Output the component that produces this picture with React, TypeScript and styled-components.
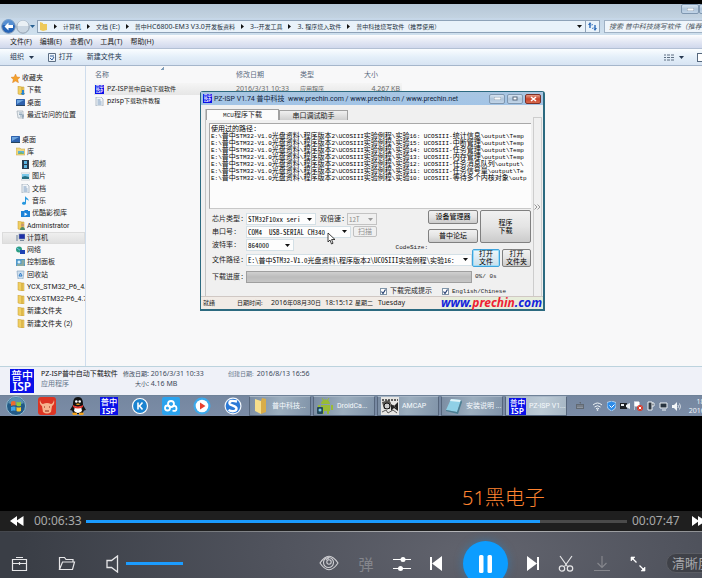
import React from "react";
import styled, { createGlobalStyle } from "styled-components";

const UI = `"Noto Sans", "Noto Sans CJK SC", sans-serif`;
const NARROW = `Roboto, "Noto Sans CJK SC", sans-serif`;
const MONO = `"Liberation Mono", "Noto Sans CJK SC", monospace`;

const Global = createGlobalStyle`
  * { box-sizing: border-box; }
  body { margin: 0; background: #000; overflow: hidden; }
  button, input, select { font: inherit; color: inherit; margin: 0; padding: 0; }
  button { cursor: pointer; }
  svg { display: block; flex: none; }
`;

/* ---------- text ---------- */

const Latin = styled.span<{ $size: number }>`
  font-size: ${(p) => p.$size}px;
`;

function Mixed({ text, latin }: { text: string; latin: number }) {
  const parts = text.split(/([\x20-\x7e]+)/).filter(Boolean);
  return (
    <>
      {parts.map((part, i) =>
        /^[\x20-\x7e]/.test(part) ? (
          <Latin key={i} $size={latin}>{part}</Latin>
        ) : (
          <React.Fragment key={i}>{part}</React.Fragment>
        ),
      )}
    </>
  );
}

/* ---------- page ---------- */

const Page = styled.div`
  display: flex;
  flex-direction: column;
  height: 100vh;
  padding-top: 4px;
  overflow: hidden;
  background: #000;
  font-family: ${UI};
`;

const Desktop = styled.main`
  position: relative;
  flex: 1;
  min-height: 0;
  display: flex;
  flex-direction: column;
  background: #f8f8f9;
  color: #1c1c1c;
  font-size: 7px;
  line-height: 10px;
  white-space: nowrap;
`;

const TitleStrip = styled.div`
  display: flex;
  justify-content: flex-end;
  height: 14px;
  background: linear-gradient(#b5c6d6, #c3d3e1);
`;

const CaptionButton = styled.button<{ $close?: boolean; $w: number }>`
  display: grid;
  place-items: center;
  width: ${(p) => p.$w}px;
  height: 10px;
  border: 1px solid ${(p) => (p.$close ? "#7c3028" : "#7f97b0")};
  border-radius: 2px;
  background: ${(p) =>
    p.$close ? "linear-gradient(#e39a85, #c8432b 50%, #d8694c)" : "linear-gradient(#d4e2f0, #afc5da 50%, #c2d5e8)"};
`;

const WindowButtons = styled.div`
  display: flex;
  margin-right: -14px;
`;

const AddressRow = styled.div`
  display: flex;
  align-items: center;
  height: 17px;
  padding-left: 1px;
  background: linear-gradient(#c5d6e7, #cfe0ee);
`;

const NavButton = styled.button`
  display: grid;
  place-items: center;
  border: 0;
  background: none;
`;

const AddressBox = styled.nav`
  display: flex;
  align-items: center;
  flex: 1;
  min-width: 0;
  height: 13px;
  margin-left: 2px;
  padding-left: 1px;
  border: 1px solid #8ea2b8;
  background: #e9f2fa;
  font-size: 6px;
`;

const Crumb = styled.a`
  display: flex;
  align-items: center;
  color: #26323f;
  text-decoration: none;
  white-space: pre;
`;

const CrumbArrow = styled.span`
  display: grid;
  place-items: center;
  width: 15px;
`;

const Push = styled.span`
  flex: 1;
`;

const Refresh = styled.button`
  display: grid;
  place-items: center;
  align-self: stretch;
  width: 14px;
  margin-left: 3px;
  border: 0;
  border-left: 1px solid #8ea2b8;
  background: none;
`;

const Search = styled.input`
  width: 112px;
  height: 13px;
  margin: 0 -14px 0 4px;
  padding: 0 4px;
  border: 1px solid #9fb1c4;
  background: #eff5fb;
  font-size: 7px;
  font-style: italic;
  &::placeholder { color: #4c5560; opacity: 1; }
`;

const MenuBar = styled.div`
  display: flex;
  align-items: center;
  gap: 8px;
  height: 14px;
  padding-left: 10px;
  border-bottom: 1px solid #b3c0d4;
  background: linear-gradient(#fdfdfe, #e6eaf5 45%, #d0d8ec);
`;

const Plain = styled.button`
  display: flex;
  align-items: center;
  gap: 3px;
  border: 0;
  background: none;
  white-space: pre;
`;

const ToolBar = styled.div`
  display: flex;
  align-items: center;
  gap: 14px;
  height: 17px;
  padding-left: 10px;
  border-bottom: 1px solid #a5b6cb;
  background: linear-gradient(#fafdff, #e4eff9 50%, #d8e4f3);
  color: #26374f;
`;

const ToolRight = styled.div`
  display: flex;
  align-items: center;
  gap: 5px;
  margin: 0 -1px 0 auto;
`;

const Body = styled.div`
  flex: 1;
  min-height: 0;
  display: flex;
`;

const Side = styled.ul`
  display: flex;
  flex-direction: column;
  width: 86px;
  margin: 0;
  padding: 6px 0 36px 2px;
  overflow: hidden;
  border-right: 1px solid #cfdded;
  font-family: ${NARROW};
  list-style: none;
`;

const SideItem = styled.li<{ $depth: number; $on?: boolean }>`
  flex: 1;
  display: flex;
  align-items: center;
  gap: 2px;
  padding-left: ${(p) => 9 + p.$depth * 5}px;
  background: ${(p) => (p.$on ? "linear-gradient(#f0f0f0, #dedede)" : "none")};
  box-shadow: ${(p) => (p.$on ? "inset 0 0 0 1px #dcdcdc" : "none")};
`;

const Files = styled.table`
  align-self: flex-start;
  width: 308px;
  margin-left: 8px;
  border-collapse: collapse;
  table-layout: fixed;
  font-size: 6px;
  text-align: left;
  th { height: 17px; padding: 0 0 0 1px; font-weight: 400; font-size: 7px; color: #5a6b80; vertical-align: middle; }
  td { height: 12px; padding: 0 0 0 1px; color: #6b6b6b; }
  td:last-child { text-align: right; padding-right: 2px; }
`;

const Col = styled.col<{ $w?: number }>`
  width: ${(p) => (p.$w ? p.$w + "px" : "auto")};
`;

const FirstHead = styled.th`
  background: linear-gradient(135deg, transparent 50%, #7f9db9 50%) 67px 1px / 3px 3px no-repeat;
`;

const FileRow = styled.tr<{ $on?: boolean }>`
  background: ${(p) => (p.$on ? "linear-gradient(#f5f5f5, #e6e6e6)" : "none")};
`;

const FileName = styled.a`
  display: flex;
  align-items: center;
  gap: 3px;
  color: #1c1c1c;
  text-decoration: none;
`;

const Details = styled.footer`
  display: flex;
  align-items: flex-start;
  gap: 7px;
  height: 29px;
  padding: 2px 10px;
  border-top: 1px solid #bcd3de;
  background: #eff1f8;
`;

const DetailGrid = styled.dl`
  display: grid;
  grid-template-columns: 79px auto 47px auto;
  column-gap: 3px;
  margin: 0;
  font-size: 6px;
  line-height: 10px;
  color: #3c4a5a;
  dt, dd { margin: 0; }
  dt { text-align: right; color: #66768a; }
`;

const DetailName = styled.dd<{ $muted?: boolean }>`
  color: ${(p) => (p.$muted ? "#66768a" : "#101010")};
  font-size: 7px;
`;

/* ---------- taskbar ---------- */

const TaskBar = styled.div`
  display: flex;
  align-items: center;
  height: 21px;
  border-top: 1px solid #6f8298;
  background: linear-gradient(#7587a0, #7b8ca6);
`;

const Pinned = styled.div`
  display: flex;
  align-items: center;
  flex: none;
  margin-right: 1px;
`;

const PinButton = styled.button`
  display: grid;
  place-items: center;
  width: 31px;
  height: 20px;
  border: 0;
  background: none;
`;

const Task = styled.button<{ $on?: boolean }>`
  display: flex;
  align-items: center;
  gap: 3px;
  flex: none;
  width: 62px;
  height: 20px;
  margin-right: 2px;
  padding-left: 3px;
  overflow: hidden;
  border: 1px solid #56667c;
  border-top-color: #a9b7c7;
  background: ${(p) =>
    p.$on ? "linear-gradient(100deg, #a3b4c4, #bccad5 60%, #a6b6c4)" : "linear-gradient(100deg, #7b8da3, #9caebe 50%, #8194a9)"};
  color: #f6fafd;
  font-family: ${NARROW};
`;

const Tray = styled.div`
  display: flex;
  align-items: center;
  gap: 4px;
  margin-left: 3px;
`;

const Clock = styled.div`
  margin: 0 -20px 0 auto;
  color: #eef3f8;
  line-height: 9px;
  text-align: center;
`;

/* ---------- programmer dialog ---------- */

const Dialog = styled.section`
  position: absolute;
  left: 200px;
  top: 87px;
  width: 345px;
  display: flex;
  flex-direction: column;
  border: 1px solid #2c6a80;
  border-width: 1px 2px 2px 1px;
  border-radius: 3px 3px 0 0;
  background: #f0f0f0;
  font-family: ${MONO};
  line-height: 8px;
`;

const DialogTitle = styled.header`
  display: flex;
  align-items: center;
  gap: 2px;
  height: 13px;
  padding: 0 2px;
  background: linear-gradient(#a9c6e2, #a2c4e6);
  color: #10233a;
  font-family: ${NARROW};
  h1 { flex: 1; margin: 0; font-size: 7px; font-weight: 400; white-space: pre; }
`;

const DialogBody = styled.div`
  display: flex;
  gap: 2px;
  margin: 0 1px 0 4px;
  padding-top: 4px;
`;

const DialogMain = styled.div`
  flex: 1;
  min-width: 0;
  border-left: 1px solid #c4c4c4;
`;

const Tabs = styled.div`
  display: flex;
  align-items: flex-end;
  height: 11px;
`;

const Tab = styled.button<{ $on?: boolean }>`
  width: ${(p) => (p.$on ? 73 : 69)}px;
  height: ${(p) => (p.$on ? 11 : 10)}px;
  border: 1px solid #a0a0a0;
  border-bottom: 0;
  background: ${(p) => (p.$on ? "#fbfbfb" : "linear-gradient(#f0f0f0, #cfcfcf)")};
  line-height: 8px;
`;

const History = styled.pre`
  height: 86px;
  margin: 3px 0 0 3px;
  padding: 2px 0 0 1px;
  overflow: hidden;
  border: 1px solid #a8a8a8;
  border-right: 0;
  border-bottom-color: #c8c8c8;
  background: #fcfcfc;
  color: #000;
  font-family: ${MONO};
  font-size: 7px;
  line-height: 7px;
`;

const HistoryLine = styled.div`
  height: 7px;
`;

const Rail = styled.div`
  display: flex;
  flex-direction: column;
  align-items: center;
  justify-content: center;
  width: 9px;
  margin-top: 8px;
  border: 1px solid #cdcdcd;
  border-bottom: 0;
`;

const Form = styled.form`
  display: flex;
  flex-direction: column;
  padding: 1px 0 0 6px;
`;

const FormTop = styled.div`
  display: flex;
`;

const FormLeft = styled.div`
  flex: 1;
  padding-top: 3px;
`;

const FormRight = styled.div`
  display: grid;
  grid-template-columns: 50px 51px;
  grid-template-rows: 14px 14px;
  gap: 5px 2px;
  > :last-child { grid-column: 2; grid-row: 1 / 3; }
`;

const Row = styled.div<{ $h: number }>`
  display: flex;
  align-items: center;
  height: ${(p) => p.$h}px;
`;

const Label = styled.label<{ $w: number }>`
  flex: none;
  width: ${(p) => p.$w}px;
`;

const MidLabel = styled(Label)`
  padding-left: 4px;
`;

const Indent = styled.span`
  flex: none;
  width: 168px;
`;

const Picker = styled.span<{ $w?: number; $off?: boolean }>`
  display: flex;
  align-items: center;
  flex: ${(p) => (p.$w ? "none" : "1")};
  min-width: 0;
  width: ${(p) => (p.$w ? p.$w + "px" : "auto")};
  height: 12px;
  padding-right: 3px;
  border: 1px solid ${(p) => (p.$off ? "#c3c3c3" : "#d4e0e6")};
  background: ${(p) => (p.$off ? "#f0f0f0" : "#fdfdfd")};
  color: ${(p) => (p.$off ? "#8c8c8c" : "#000")};
  select {
    flex: 1;
    min-width: 0;
    height: 10px;
    padding-left: 1px;
    appearance: none;
    border: 0;
    background: none;
    font-family: "Noto Sans CJK SC", sans-serif;
    font-feature-settings: "hwid";
    font-size: 7px;
    line-height: 10px;
    white-space: pre;
    opacity: 1;
  }
`;

const Push3D = styled.button<{ $focus?: boolean; $off?: boolean; $w?: number; $h?: number }>`
  width: ${(p) => (p.$w ? p.$w + "px" : "auto")};
  height: ${(p) => (p.$h ? p.$h + "px" : "auto")};
  border: 1px solid ${(p) => (p.$focus ? "#3fa3dc" : p.$off ? "#c0c0c0" : "#808080")};
  border-radius: 2px;
  box-shadow: ${(p) => (p.$focus ? "inset 0 0 0 1px #9bdcf8" : "none")};
  background: ${(p) => (p.$off ? "#f0f0f0" : p.$focus ? "linear-gradient(#eef6fa, #c9dfeb)" : "linear-gradient(#f1f1f1, #e4e4e4 50%, #cbcbcb)")};
  color: ${(p) => (p.$off ? "#909090" : "#000")};
  font-size: 7px;
  line-height: 8px;
`;

const ScanButton = styled(Push3D)`
  margin-left: 2px;
`;

const SmallCode = styled.output`
  align-self: flex-end;
  margin-left: auto;
  font-size: 6px;
`;

const FileButtons = styled.div`
  display: flex;
  gap: 2px;
  margin-top: -4px;
`;

const Meter = styled.div`
  flex: 1;
  height: 12px;
  border: 1px solid #9f9f9f;
  background: linear-gradient(#d0d0d0, #bcbcbc 50%, #c6c6c6);
`;

const Percent = styled.span`
  width: 59px;
  padding-left: 3px;
  font-size: 6px;
`;

const CheckLabel = styled.label<{ $w: number }>`
  display: flex;
  align-items: center;
  gap: 3px;
  width: ${(p) => p.$w}px;
  input {
    appearance: none;
    width: 7px;
    height: 7px;
    border: 1px solid #8095a8;
    background: #fff;
  }
`;

const CheckBox = styled.span`
  display: grid;
  > * { grid-area: 1 / 1; }
  svg { pointer-events: none; }
`;

const Status = styled.footer`
  display: flex;
  align-items: center;
  height: 13px;
  padding-left: 2px;
  border-top: 1px solid #d0c8c4;
  background: #f1ebe6;
  font-family: ${UI};
  font-size: 6px;
  span { white-space: pre; }
`;

const StatusCell = styled.span<{ $w: number }>`
  width: ${(p) => p.$w}px;
`;

const SiteLink = styled.a`
  margin-left: auto;
  padding-right: 1px;
  background: #e7edda;
  color: #1425dc;
  font-family: "Noto Sans", sans-serif;
  font-size: 12px;
  font-style: italic;
  font-weight: 700;
  line-height: 12px;
  text-decoration: none;
  em { color: #ee2233; }
`;

const Pointer = styled.span`
  position: absolute;
  left: 327px;
  top: 228px;
`;

/* ---------- player ---------- */

const Stage = styled.div`
  display: flex;
  align-items: flex-end;
  height: 95px;
  padding-left: 462px;
  color: #ff8330;
  font-size: 20px;
  font-weight: 300;
  line-height: 27px;
  white-space: nowrap;
  background: #000;
`;

const SeekRow = styled.div`
  display: flex;
  align-items: center;
  height: 20px;
  padding-left: 10px;
  background: #1f1f1f;
  color: #a9a9a9;
  font-size: 12px;
  line-height: 16px;
`;

const IconButton = styled.button<{ $w: number; $before?: number; $dim?: boolean }>`
  display: grid;
  place-items: center;
  flex: none;
  width: ${(p) => p.$w}px;
  height: 45px;
  margin-left: ${(p) => p.$before ?? 0}px;
  border: 0;
  background: none;
  color: ${(p) => (p.$dim ? "#85868c" : "#fff")};
  font-size: 15px;
  line-height: 20px;
`;

const SeekButton = styled(IconButton)`
  height: 20px;
`;

const ForwardButton = styled(SeekButton)`
  margin-right: -4px;
`;

const Time = styled.time<{ $before: number }>`
  width: 48px;
  margin-left: ${(p) => p.$before}px;
`;

const Range = styled.input<{ $value: number; $before: number; $w?: number }>`
  appearance: none;
  flex: ${(p) => (p.$w ? "none" : "1")};
  width: ${(p) => (p.$w ? p.$w + "px" : "auto")};
  min-width: 0;
  height: 3px;
  margin-left: ${(p) => p.$before}px;
  outline: 0;
  background: linear-gradient(to right, #1b9cff ${(p) => p.$value}%, #4a4a4a ${(p) => p.$value}%);
  &::-webkit-slider-thumb { appearance: none; width: 0; height: 0; }
`;

const Seek = styled(Range)`
  margin-right: 5px;
`;

const Controls = styled.div`
  display: flex;
  align-items: flex-start;
  height: 47px;
  padding: 9px 0 0 11px;
  overflow: hidden;
  border-top: 1px solid;
  border-image: linear-gradient(to right, #43464c, #777a7e 30%, #b4b5b8 65%, #8f9194) 1;
  background: radial-gradient(ellipse 460px 160px at 480px 20px, #62646e, #50535d 45%, #3a3e46);
`;

const Slot = styled.div`
  display: flex;
  align-items: center;
  height: 45px;
`;

const PauseButton = styled.button`
  display: grid;
  place-items: center;
  flex: none;
  width: 45px;
  height: 45px;
  margin-left: 20px;
  border: 0;
  border-radius: 50%;
  background: #0c9dff;
  box-shadow: 0 0 8px #1b84cf88;
`;

const Quality = styled.button`
  flex: none;
  width: 64px;
  height: 20px;
  padding-left: 5px;
  margin: 12px -28px 0 auto;
  border: 1px solid #5a5c63;
  border-radius: 10px;
  background: #3f4148;
  color: #a8a9ad;
  font-size: 13px;
  line-height: 16px;
  text-align: left;
`;

/* ---------- icons ---------- */

const Down = ({ c = "#111" }: { c?: string }) => (
  <svg width="5" height="3" viewBox="0 0 5 3"><path d="M0 0h5L2.500 3z" fill={c} /></svg>
);
const RightTip = () => (
  <svg width="3" height="5" viewBox="0 0 3 5"><path d="M0 0l3 2.500L0 5z" fill="#111" /></svg>
);

const IspLogo = ({ size }: { size: number }) => (
  <svg width={size} height={size} viewBox="0 0 24 24">
    <rect width="24" height="24" fill="#0a10e8" />
    <text x="12" y="11" fontSize="11" fontWeight="500" textAnchor="middle" fill="#fff" fontFamily="Noto Sans CJK SC, sans-serif">普中</text>
    <text x="12" y="22" fontSize="12" fontWeight="600" textAnchor="middle" fill="#fff" fontFamily="Noto Sans, sans-serif">ISP</text>
  </svg>
);

type Glyph = "star" | "down" | "desk" | "recent" | "lib" | "video" | "pic" | "doc" | "music" | "youku" | "user" | "pc" | "net" | "panel" | "bin" | "folder";

function SideIcon({ kind }: { kind: Glyph }) {
  const folder = <path d="M2 0l4 1v8l-4-1z M6 1h2v8H6z" fill="#f0cf62" stroke="#c69a35" strokeWidth=".5" />;
  const art: Record<Glyph, React.ReactNode> = {
    star: <path d="M4.500 0l1.400 3 3.100.3-2.300 2.200.8 3.300-3-1.700-3 1.700.8-3.300L0 3.300 3.100 3z" fill="#f4a12c" stroke="#d97a1c" strokeWidth=".4" />,
    down: <>{folder}<path d="M6 4v3H4.500L7 9.500 9 7H8V4z" fill="#2585d3" /></>,
    desk: <><rect y="1" width="9" height="7" rx=".5" fill="#2f62ad" /><path d="M1 2h7L1 6z" fill="#6ea6df" /><path d="M0 7h9v1H0z" fill="#26435f" /></>,
    recent: <><path d="M1 1h6v7H2z" fill="#e9eef2" stroke="#93a0aa" strokeWidth=".6" /><path d="M3 3h3M3 4.500h3M4 6h4M7 4v5" stroke="#6f8ba5" strokeWidth=".7" /></>,
    lib: <><path d="M0 1h4l1 1h4v6H0z" fill="#f0d77e" stroke="#c6a14a" strokeWidth=".5" /><path d="M2 4h6v3H2z" fill="#5fb0d8" /><path d="M2 7l3-2 3 2z" fill="#7eb55a" /></>,
    video: <><rect x="1" width="7" height="9" fill="#2a3a4c" /><path d="M3 1h3v3H3zM3 5h3v3H3z" fill="#5cb4e0" /></>,
    pic: <><rect y="1" width="9" height="7" fill="#fff" stroke="#9aa9b5" strokeWidth=".5" /><path d="M1 2h7v3H1z" fill="#7cc8ea" /><path d="M1 5l3-1 4 1v2H1z" fill="#256f83" /></>,
    doc: <><path d="M1 0h5l2 2v7H1z" fill="#f2f5f8" stroke="#8697a8" strokeWidth=".6" /><path d="M2.500 3h3M2.500 5h4M2.500 7h4" stroke="#5881ad" strokeWidth=".8" /></>,
    music: <path d="M4 0c1 2 4 2 3.500 5C7 3.500 6 3.500 5 3.500V7.500A2 1.500 0 1 1 4 6z" fill="#2798df" />,
    youku: <><path d="M0 2h3l1-1h3v1h2v6H0z" fill="#1d83d8" /><path d="M3.500 3.500l3 1.800-3 1.700z" fill="#fff" /></>,
    user: <>{folder}<circle cx="6.500" cy="4" r="1.500" fill="#c79672" /><path d="M4 9c0-4 5-4 5 0z" fill="#4f8b6a" /></>,
    pc: <><path d="M0 2h2v6H0z" fill="#aab4bf" /><rect x="3" y="1" width="6" height="5" fill="#1e2fa8" stroke="#7d8fa5" strokeWidth=".6" /><path d="M4 7h4v1H4z" fill="#78899b" /></>,
    net: <><circle cx="3" cy="3.500" r="3" fill="#2b9d83" /><path d="M1 2l4 3" stroke="#6fc4ee" /><rect x="4" y="4" width="5" height="4" fill="#1f43b4" /></>,
    panel: <><rect y="1" width="9" height="7" fill="#5199cb" /><circle cx="3" cy="4" r="1.500" fill="#d9f0fa" /><path d="M5.500 3h3M5.500 5h3M1 7h7" stroke="#e5c35d" strokeWidth=".8" /></>,
    bin: <><path d="M1 1h7L7 9H2z" fill="#cfe0ef" stroke="#7d9cba" strokeWidth=".6" /><path d="M3 6l1.500-3L6 6z" fill="none" stroke="#2f7ac7" /></>,
    folder,
  };
  return <svg width="9" height="9" viewBox="0 0 9 9">{art[kind]}</svg>;
}

const sideItems: { t: string; k?: Glyph; d: number; on?: boolean }[] = [
  { t: "收藏夹", k: "star", d: 0 },
  { t: "下载", k: "down", d: 1 },
  { t: "桌面", k: "desk", d: 1 },
  { t: "最近访问的位置", k: "recent", d: 1 },
  { t: "", d: 0 },
  { t: "桌面", k: "desk", d: 0 },
  { t: "库", k: "lib", d: 1 },
  { t: "视频", k: "video", d: 2 },
  { t: "图片", k: "pic", d: 2 },
  { t: "文档", k: "doc", d: 2 },
  { t: "音乐", k: "music", d: 2 },
  { t: "优酷影视库", k: "youku", d: 2 },
  { t: "Administrator", k: "user", d: 1 },
  { t: "计算机", k: "pc", d: 1, on: true },
  { t: "网络", k: "net", d: 1 },
  { t: "控制面板", k: "panel", d: 1 },
  { t: "回收站", k: "bin", d: 1 },
  { t: "YCX_STM32_P6_4.7", k: "folder", d: 1 },
  { t: "YCX-STM32-P6_4.7", k: "folder", d: 1 },
  { t: "新建文件夹", k: "folder", d: 1 },
  { t: "新建文件夹 (2)", k: "folder", d: 1 },
];

const crumbs = ["计算机", "文档 (E:)", "普中HC6800-EM3 V3.0开发板资料", "3--开发工具", "3. 程序烧入软件", "普中科技烧写软件（推荐使用）"];

const base = "E:\\普中STM32-V1.0光盘资料\\程序版本2\\UCOSIII实验例程\\实验";
const history = [
  "16: UCOSIII-统计信息\\output\\Temp",
  "15: UCOSIII-中断管理\\output\\Temp",
  "14: UCOSIII-任务管理\\output\\Temp",
  "13: UCOSIII-内存管理\\output\\Temp",
  "12: UCOSIII-任务消息队列\\output\\",
  "11: UCOSIII-任务信号量\\output\\Te",
  "10: UCOSIII-等待多个内核对象\\outp",
];

const pins: { name: string; art: React.ReactNode }[] = [
  { name: "开始", art: <svg width="20" height="20" viewBox="0 0 20 20"><circle cx="10" cy="10" r="9.500" fill="#235a86" stroke="#8fb9cf" /><path d="M2 7a8.500 8.500 0 0 1 16 0q-8 4-16 0z" fill="#7fb4cc" opacity=".6" /><path d="M5 6q2-1.500 4.500-.5v4Q7 9 5 10z" fill="#ee6a2d" /><path d="M10.500 5.800q2 1 4.500 0v4q-2.500 1-4.500 0z" fill="#8fc93d" /><path d="M5 11q2-1 4.500-.3v4Q7 14 5 15z" fill="#42a5e8" /><path d="M10.500 11q2 1 4.500 0v4q-2.500 1-4.500 0z" fill="#fbc82e" /></svg> },
  { name: "游戏", art: <svg width="18" height="18" viewBox="0 0 18 18"><rect width="18" height="18" rx="3" fill="#dd3423" /><path d="M2 3q1 4 3 4 4-2 8 0 2 0 3-4 1 4-2 6l-1 6q-4 3-8 0L4 9Q1 7 2 3z" fill="#f7b48e" /><path d="M6 10h1M11 10h1M7 14h4" stroke="#8a2717" /></svg> },
  { name: "QQ", art: <svg width="18" height="18" viewBox="0 0 18 18"><path d="M9 0C4 0 4 5 4 8l-3 5 2 .5L5 17h8l2-3.500 2-.5-3-5c0-3 0-8-5-8z" fill="#111" /><path d="M6 9q3 2 6 0l1 5q-4 4-8 0z" fill="#fff" /><path d="M4 8q5 3 10 0v2q-5 3-10 0z" fill="#e5322c" /><circle cx="7.300" cy="4.500" r="1.300" fill="#fff" /><circle cx="10.700" cy="4.500" r="1.300" fill="#fff" /><path d="M6.500 7q2.500-1 5 0-2.500 1.800-5 0zM3 16q2-1 5 0v2H4zM10 16q3-1 5 0l-1 2h-4z" fill="#f3a21c" /></svg> },
  { name: "PZ-ISP", art: <IspLogo size={18} /> },
  { name: "酷狗", art: <svg width="18" height="18" viewBox="0 0 18 18"><circle cx="9" cy="9" r="7.500" fill="#1c84d0" stroke="#fff" strokeWidth="1.200" /><path d="M7 5.500v7M11.500 5.500L8.500 9l3 3.500M7 9h1.500" stroke="#fff" strokeWidth="1.600" fill="none" /></svg> },
  { name: "网盘", art: <svg width="18" height="18" viewBox="0 0 18 18"><rect width="18" height="18" rx="2" fill="#2ba3ee" /><circle cx="9" cy="7" r="3" fill="none" stroke="#fff" strokeWidth="1.800" /><circle cx="5.500" cy="11" r="2.500" fill="none" stroke="#fff" strokeWidth="1.800" /><path d="M10.500 9q4-1 4 2.500t-4 2" fill="none" stroke="#fff" strokeWidth="1.800" /></svg> },
  { name: "播放器", art: <svg width="18" height="18" viewBox="0 0 18 18"><circle cx="9" cy="9" r="8.500" fill="#3ba9ec" /><circle cx="9" cy="9" r="6.300" fill="#fff" /><path d="M7 5.500l5.500 3.500L7 12.500z" fill="#e8402f" /></svg> },
  { name: "搜狗", art: <svg width="18" height="18" viewBox="0 0 18 18"><circle cx="9" cy="9" r="8.500" fill="#f4f8fc" /><circle cx="9" cy="9" r="7.300" fill="#2b79d6" /><path d="M13 4.500Q5 2.500 5.500 6.500C6 9 12.500 8.500 12.500 11.500S8 15 4.500 13" fill="none" stroke="#fff" strokeWidth="2.400" /></svg> },
];

const tasks: { t: string; on?: boolean; art: React.ReactNode }[] = [
  { t: "普中科技...", art: <svg width="16" height="18" viewBox="0 0 16 18"><path d="M2 2l6 2v13l-6-3z" fill="#f7df8b" /><path d="M8 4l1-3 4 1v13l-5 2z" fill="#d9ad49" /></svg> },
  { t: "DroidCa...", art: <svg width="17" height="18" viewBox="0 0 17 18"><path d="M4 7a4.500 4.500 0 0 1 9 0zM4 8h9v6H4zM1 8h2v5H1zM14 8h2v5h-2zM5 14h2v3H5zM10 14h2v3h-2z" fill="#99bb35" /><path d="M5 1l2 3M12 1l-2 3" stroke="#99bb35" /><rect y="10" width="6" height="7" rx="1" fill="#23485a" /><circle cx="3" cy="13" r="1.500" fill="#7fc8e8" /></svg> },
  { t: "AMCAP", art: <svg width="18" height="18" viewBox="0 0 18 18"><rect width="18" height="18" fill="#e6e6e4" /><path d="M1 5l7-2 2 3-1 6H3z" fill="#55534f" /><path d="M1 3h8M10 3h7" stroke="#333" strokeWidth="1.400" strokeDasharray="2 1" /><circle cx="6" cy="9" r="3" fill="#ccc" stroke="#111" /><path d="M10 7l3 2 4-4v9l-4-3-3 3z" fill="#222" /><path d="M1 15l4-2 2 3 5-3 4 3M12 8l3 3" stroke="#555" fill="none" /></svg> },
  { t: "安装说明 ...", art: <svg width="18" height="18" viewBox="0 0 18 18"><path d="M6 2l10 1-4 12-11-2z" fill="#8fd0e6" /><path d="M6 2l10 1-1 2-10-1z" fill="#dff3f8" /><path d="M16 3l1 2-4 12-12-3v-1l11 2z" fill="#4a7f93" /></svg> },
  { t: "PZ-ISP V1...", on: true, art: <IspLogo size={17} /> },
];

const TrayIcons = () => (
  <Tray>
    <svg width="16" height="10" viewBox="0 0 16 10"><path d="M4 3h8v5H4zM7 1h2v2" fill="#616973" /><path d="M5 5h6M5 6.500h6" stroke="#aeb6bf" strokeWidth=".6" /></svg>
    <svg width="11" height="10" viewBox="0 0 11 10" fill="none" stroke="#eef3f7"><path d="M1 4q4.500-4 9 0M2.500 6q3-2.600 6 0M4 7.800q1.500-1.200 3 0" /><circle cx="5.500" cy="9" r=".5" /></svg>
    <svg width="9" height="10" viewBox="0 0 9 10"><path d="M4.500 0L9 1.500V5q0 3-4.500 5Q0 8 0 5V1.500z" fill="#2e8ce8" stroke="#d9ebfa" strokeWidth=".7" /><path d="M2.500 4.500l2 2 3-3" stroke="#fff" fill="none" /></svg>
    <svg width="10" height="8" viewBox="0 0 10 8"><path d="M0 1h7v6H0z" fill="#1b2026" /><path d="M1 2h3v2H1zM6 3l4-2v6L6 5z" fill="#e9eef2" /></svg>
    <svg width="9" height="10" viewBox="0 0 9 10"><path d="M0 0v9M1 1h4v4H1z" fill="#fff" stroke="#fff" /><circle cx="6" cy="7" r="3" fill="#d93a2b" /><path d="M4.800 5.800l2.400 2.400m0-2.400L4.800 8.200" stroke="#fff" /></svg>
    <svg width="8" height="10" viewBox="0 0 8 10"><path d="M1 1h4v8H1zM5 2h2v3H5" fill="#303943" stroke="#eef3f7" /></svg>
    <svg width="9" height="9" viewBox="0 0 9 9"><path d="M1 1h7v5H1z" fill="#283440" stroke="#eef3f7" /><path d="M3 8h4" stroke="#eef3f7" /></svg>
    <svg width="9" height="9" viewBox="0 0 9 9"><path d="M0 3h2l3-3v9L2 6H0z" fill="#f3f6f9" /><path d="M6 3q1 1.500 0 3M7.500 1.500q2 3 0 6" stroke="#f3f6f9" fill="none" strokeWidth=".8" /></svg>
  </Tray>
);

/* ---------- pieces ---------- */

function Pick({ id, value, w, off }: { id: string; value: string; w?: number; off?: boolean }) {
  return (
    <Picker $w={w} $off={off}>
      <select id={id} disabled={off} defaultValue={value}>
        <option value={value}>{value}</option>
      </select>
      <Down c={off ? "#999" : "#111"} />
    </Picker>
  );
}

function Check({ text, w }: { text: string; w: number }) {
  return (
    <CheckLabel $w={w}>
      <CheckBox>
        <input type="checkbox" defaultChecked />
        <svg width="7" height="7" viewBox="0 0 7 7"><path d="M1.500 3.500l1.500 2 2.500-4" stroke="#233e70" strokeWidth="1.200" fill="none" /></svg>
      </CheckBox>
      <span><Mixed text={text} latin={6} /></span>
    </CheckLabel>
  );
}

function IspDialog() {
  return (
    <Dialog>
      <DialogTitle>
        <IspLogo size={9} />
        <h1>PZ-ISP V1.74 普中科技  www.prechin.com / www.prechin.cn / www.prechin.net</h1>
        <CaptionButton $w={16} aria-label="最小化"><svg width="7" height="3"><rect width="7" height="3" fill="#f7f9fb" stroke="#65788c" strokeWidth=".6" /></svg></CaptionButton>
        <CaptionButton $w={16} aria-label="最大化"><svg width="6" height="5"><rect x="1" y="1" width="4" height="3" fill="#fff" stroke="#58697c" /></svg></CaptionButton>
        <CaptionButton $w={16} $close aria-label="关闭"><svg width="7" height="6" viewBox="0 0 7 6"><path d="M1 1l5 4M6 1L1 5" stroke="#fff" strokeWidth="1.600" /></svg></CaptionButton>
      </DialogTitle>
      <DialogBody>
        <DialogMain>
          <Tabs>
            <Tab $on><Mixed text="MCU程序下载" latin={6} /></Tab>
            <Tab>串口调试助手</Tab>
          </Tabs>
          <History>
            <HistoryLine>使用过的路径:</HistoryLine>
            {history.map((h) => (
              <HistoryLine key={h}><Mixed text={base + h} latin={6} /></HistoryLine>
            ))}
          </History>
          <Form onSubmit={(e) => e.preventDefault()}>
            <FormTop>
              <FormLeft>
                <Row $h={12}>
                  <Label $w={34} htmlFor="chip">芯片类型:</Label>
                  <Pick id="chip" value="STM32F10xx seri" w={70} />
                  <MidLabel $w={31} htmlFor="speed">双倍速:</MidLabel>
                  <Pick id="speed" value="12T" w={30} off />
                </Row>
                <Row $h={13}>
                  <Label $w={34} htmlFor="port">串口号:</Label>
                  <Pick id="port" value={"COM4\u00a0 USB-SERIAL CH340"} w={105} />
                  <ScanButton $w={24} $h={11} $off type="button">扫描</ScanButton>
                </Row>
                <Row $h={14}>
                  <Label $w={34} htmlFor="baud">波特率:</Label>
                  <Pick id="baud" value="864000" w={48} />
                  <SmallCode>CodeSize:</SmallCode>
                </Row>
              </FormLeft>
              <FormRight>
                <Push3D type="button">设备管理器</Push3D>
                <Push3D type="button">普中论坛</Push3D>
                <Push3D type="button">程序<br />下载</Push3D>
              </FormRight>
            </FormTop>
            <Row $h={15}>
              <Label $w={34} htmlFor="path">文件路径:</Label>
              <Pick id="path" value={base + "16:"} />
              <FileButtons>
                <Push3D $w={28} $h={18} $focus type="button">打开<br />文件</Push3D>
                <Push3D $w={29} $h={18} type="button">打开<br />文件夹</Push3D>
              </FileButtons>
            </Row>
            <Row $h={19}>
              <Label as="span" $w={34}>下载进度:</Label>
              <Meter role="progressbar" aria-valuenow={0} />
              <Percent>0%/ 0s</Percent>
            </Row>
            <Row $h={10}>
              <Indent />
              <Check text="下载完成提示" w={62} />
              <Check text="English/Chinese" w={80} />
            </Row>
          </Form>
        </DialogMain>
        <Rail>
          <svg width="7" height="6" viewBox="0 0 7 6" fill="none" stroke="#8c8c8c" strokeWidth=".9"><path d="M.5.500L3 3 .5 5.500M3.500.500L6 3 3.500 5.500" /></svg>
        </Rail>
      </DialogBody>
      <Status>
        <StatusCell $w={34}>就绪</StatusCell>
        <StatusCell $w={34}>日期时间:</StatusCell>
        <StatusCell $w={54}><Mixed text="2016年08月30日" latin={7} /></StatusCell>
        <StatusCell $w={30}><Mixed text="18:15:12" latin={7} /></StatusCell>
        <StatusCell $w={23}>星期二</StatusCell>
        <StatusCell $w={30}><Mixed text="Tuesday" latin={7} /></StatusCell>
        <SiteLink href="#site">www.<em>prechin</em>.com</SiteLink>
      </Status>
    </Dialog>
  );
}

export default function App() {
  return (
    <Page>
      <Global />
      <Desktop>
        <TitleStrip>
          <WindowButtons>
            <CaptionButton $w={18} aria-label="最小化"><svg width="7" height="3"><rect width="7" height="3" fill="#f7f9fb" stroke="#65788c" strokeWidth=".6" /></svg></CaptionButton>
            <CaptionButton $w={17} aria-label="最大化" />
          </WindowButtons>
        </TitleStrip>
        <AddressRow>
          <NavButton aria-label="后退"><svg width="15" height="15" viewBox="0 0 15 15"><circle cx="7.500" cy="7.500" r="6.800" fill="#2464b8" stroke="#8499b4" /><path d="M1.500 6a6 6 0 0 1 12 0z" fill="#6ba0dc" opacity=".7" /><path d="M7.500 3.500l-4 4 4 4V9H12V6H7.500z" fill="#fff" /></svg></NavButton>
          <NavButton aria-label="前进"><svg width="14" height="14" viewBox="0 0 14 14"><circle cx="7" cy="7" r="6.200" fill="#cad6e2" stroke="#909eae" /><path d="M1.500 6a5.500 5.500 0 0 1 11 0z" fill="#eaf0f5" /></svg></NavButton>
          <NavButton aria-label="历史"><Down c="#286092" /></NavButton>
          <AddressBox>
            <svg width="9" height="9" viewBox="0 0 9 9"><path d="M1 0l3 1v8L1 8z M4 2h4v6L4 9z" fill="#eec95a" /></svg>
            {crumbs.map((c) => (
              <Crumb key={c} href="#folder">
                <CrumbArrow><RightTip /></CrumbArrow>
                <Mixed text={c} latin={7} />
              </Crumb>
            ))}
            <Push />
            <Down />
            <Refresh aria-label="刷新"><svg width="9" height="9" viewBox="0 0 9 9"><path d="M2 0L0 3h1.300v3h1.400V3H4zM2.700 2h2v1.200h-2zM7 9l2-3H7.700V3H6.300v3H5zM4.300 5.800h2V7h-2z" fill="#2a6ab8" /></svg></Refresh>
          </AddressBox>
          <Search aria-label="搜索" placeholder="搜索 普中科技烧写软件（推荐使用）" />
        </AddressRow>
        <MenuBar>
          {["文件(F)", "编辑(E)", "查看(V)", "工具(T)", "帮助(H)"].map((m) => <Plain key={m}>{m}</Plain>)}
        </MenuBar>
        <ToolBar>
          <Plain>组织 <Down c="#26374f" /></Plain>
          <Plain><svg width="8" height="9" viewBox="0 0 8 9"><path d="M.5.500h7v8h-7z" fill="#eef4fa" stroke="#5d6f84" /><path d="M2 3h4M2 5l2 2 2-3" stroke="#2d5c9b" fill="none" /></svg>打开</Plain>
          <Plain>新建文件夹</Plain>
          <ToolRight>
            <svg width="10" height="7" viewBox="0 0 10 7"><path d="M0 1h2M3 1h3M7 1h3M0 3.500h2M3 3.500h3M7 3.500h3M0 6h2M3 6h3M7 6h3" stroke="#5c6d80" /></svg>
            <Down c="#26374f" />
            <svg width="14" height="9" viewBox="0 0 14 9"><rect x="8.500" y=".5" width="9" height="8" fill="#fff" stroke="#54677d" /></svg>
          </ToolRight>
        </ToolBar>
        <Body>
          <Side>
            {sideItems.map((s, i) => (
              <SideItem key={i} $depth={s.d} $on={s.on}>
                {s.k && <SideIcon kind={s.k} />}
                {s.t}
              </SideItem>
            ))}
          </Side>
          <Files>
            <colgroup><Col $w={141} /><Col $w={64} /><Col $w={64} /><Col /></colgroup>
            <thead><tr><FirstHead>名称</FirstHead><th>修改日期</th><th>类型</th><th>大小</th></tr></thead>
            <tbody>
              <FileRow $on>
                <td><FileName href="#file"><IspLogo size={9} /><span><Mixed text="PZ-ISP普中自动下载软件" latin={7} /></span></FileName></td>
                <td><Mixed text="2016/3/31 10:33" latin={7} /></td>
                <td>应用程序</td>
                <td><Mixed text="4,267 KB" latin={7} /></td>
              </FileRow>
              <FileRow>
                <td><FileName href="#file"><SideIcon kind="doc" /><span><Mixed text="pzisp下载软件教程" latin={7} /></span></FileName></td>
                <td /><td /><td />
              </FileRow>
            </tbody>
          </Files>
        </Body>
        <Details>
          <IspLogo size={24} />
          <DetailGrid>
            <DetailName><Mixed text="PZ-ISP普中自动下载软件" latin={7} /></DetailName>
            <dd><Mixed text="修改日期: 2016/3/31 10:33" latin={7} /></dd>
            <dt>创建日期:</dt>
            <dd><Mixed text="2016/8/13 16:56" latin={7} /></dd>
            <DetailName $muted>应用程序</DetailName>
            <dd><Mixed text="　　大小: 4.16 MB" latin={7} /></dd>
          </DetailGrid>
        </Details>
        <TaskBar>
          <Pinned>
            {pins.map((p) => <PinButton key={p.name} aria-label={p.name}>{p.art}</PinButton>)}
          </Pinned>
          {tasks.map((t) => <Task key={t.t} $on={t.on}>{t.art}{t.t}</Task>)}
          <TrayIcons />
          <Clock>18:15<br />2016/8/30</Clock>
        </TaskBar>
        <IspDialog />
        <Pointer>
          <svg width="9" height="13" viewBox="0 0 9 13"><path d="M1 1v9l2-2 1.500 4 1.500-.7L4.600 7.500H8z" fill="#fff" stroke="#111" strokeWidth=".8" /></svg>
        </Pointer>
      </Desktop>
      <Stage>51黑电子</Stage>
      <SeekRow>
        <SeekButton $w={14} aria-label="快退"><svg width="14" height="10" viewBox="0 0 14 10"><path d="M7 0v10L0 5zM13.500 0v10L6 5z" fill="#fff" /></svg></SeekButton>
        <Time $before={10}>00:06:33</Time>
        <Seek type="range" aria-label="进度" defaultValue={84} $value={84} $before={4} />
        <Time $before={0}>00:07:47</Time>
        <ForwardButton $w={14} $before={12} aria-label="快进"><svg width="14" height="10" viewBox="0 0 14 10"><path d="M0 0v10l7-5zM6 0v10l8-5z" fill="#fff" /></svg></ForwardButton>
      </SeekRow>
      <Controls>
        <IconButton $w={17} aria-label="工具箱"><svg width="17" height="16" viewBox="0 0 17 16" fill="none" stroke="#e6e6e8"><path d="M1.500 3.500h14v11h-14zM5 1.500h7M1.500 7.500h14M8.500 6v3" strokeWidth="1.200" /></svg></IconButton>
        <IconButton $w={18} $before={30} aria-label="打开"><svg width="18" height="15" viewBox="0 0 18 15" fill="none" stroke="#e6e6e8" strokeWidth="1.200"><path d="M1.500 13.500v-12h5l1.500 2h7v2.500M1.500 13.500L4.500 6h12l-2 7.500z" /></svg></IconButton>
        <IconButton $w={14} $before={30} aria-label="音量"><svg width="14" height="18" viewBox="0 0 14 18" fill="none" stroke="#e6e6e8" strokeWidth="1.300"><path d="M1 5.500h4.500L11.500 1v16L5.500 12.500H1z" /></svg></IconButton>
        <Slot><Range type="range" aria-label="音量" defaultValue={100} $value={100} $before={6} $w={57} /></Slot>
        <IconButton $w={20} $before={136} aria-label="护眼"><svg width="20" height="18" viewBox="0 0 20 18" fill="none" stroke="#d0d0d4" strokeWidth="1.100"><path d="M1 8Q10-5.500 19 8 10 21.500 1 8z" /><circle cx="9.500" cy="7.500" r="5" /><circle cx="10" cy="7" r="2.200" /><path d="M7 5q1-2 3-1" /></svg></IconButton>
        <IconButton $w={18} $before={18} $dim aria-label="弹幕">弹</IconButton>
        <IconButton $w={20} $before={17} aria-label="设置"><svg width="20" height="16" viewBox="0 0 20 16"><path d="M1 3.500h18M1 12.500h18" stroke="#fff" /><circle cx="11" cy="3.500" r="2.500" fill="#fff" /><circle cx="8.500" cy="12.500" r="2.500" fill="#fff" /></svg></IconButton>
        <IconButton $w={14} $before={17} aria-label="上一个"><svg width="14" height="15" viewBox="0 0 14 15"><path d="M1 1h2v13H1zM13 0v15L3 7.500z" fill="#fff" /></svg></IconButton>
        <PauseButton aria-label="暂停"><svg width="13" height="18" viewBox="0 0 13 18"><rect width="4.500" height="18" rx="1.500" fill="#fff" /><rect x="8.500" width="4.500" height="18" rx="1.500" fill="#fff" /></svg></PauseButton>
        <IconButton $w={14} $before={18} aria-label="下一个"><svg width="14" height="15" viewBox="0 0 14 15"><path d="M11 1h2v13h-2zM1 0v15l10-7.500z" fill="#fff" /></svg></IconButton>
        <IconButton $w={16} $before={18} aria-label="截取"><svg width="16" height="17" viewBox="0 0 16 17" fill="none" stroke="#e6e6e8" strokeWidth="1.200"><path d="M2 1l7.500 10.500M14 1L6.500 11.500" /><circle cx="4" cy="13.500" r="2.700" /><circle cx="12" cy="13.500" r="2.700" /></svg></IconButton>
        <IconButton $w={18} $before={19} aria-label="下载"><svg width="18" height="16" viewBox="0 0 18 16" fill="none" stroke="#85868c" strokeWidth="1.200"><path d="M9 0v11M4.500 7L9 11.500 13.500 7M1 14.500h16" /></svg></IconButton>
        <IconButton $w={16} $before={19} aria-label="全屏"><svg width="16" height="16" viewBox="0 0 16 16" stroke="#fff" strokeWidth="1.300" fill="#fff"><path d="M2 2l4.500 4.500M9.500 9.500L14 14" /><path d="M1 1h4L1 5zM15 15h-4l4-4z" strokeWidth=".6" /></svg></IconButton>
        <Quality>清晰度</Quality>
      </Controls>
    </Page>
  );
}
